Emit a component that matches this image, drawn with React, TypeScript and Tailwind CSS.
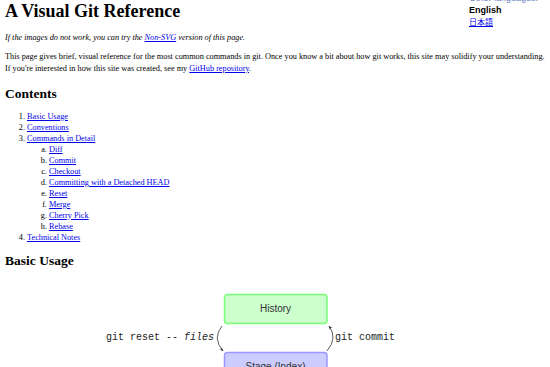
const LINK = "text-[#0000ee] underline";

// Table of contents, nested the way the page has it.
const CONTENTS: { title: string; children?: string[] }[] = [
  { title: "Basic Usage" },
  { title: "Conventions" },
  {
    title: "Commands in Detail",
    children: [
      "Diff",
      "Commit",
      "Checkout",
      "Committing with a Detached HEAD",
      "Reset",
      "Merge",
      "Cherry Pick",
      "Rebase",
    ],
  },
  { title: "Technical Notes" },
];

function Diagram() {
  // Top of the basic-usage figure; page coordinates with y shifted by the svg's top.
  return (
    <svg width="550" height="80" viewBox="0 0 550 80" className="-mx-[5px] block">
      <defs>
        <marker id="arrow" viewBox="0 0 10 10" refX="9" refY="5" markerWidth="5" markerHeight="5" orient="auto-start-reverse">
          <path d="M0 1 L10 5 L0 9 L3 5 Z" fill="#333" />
        </marker>
      </defs>
      <rect x="224.5" y="4.5" width="102.5" height="29" rx="3" fill="#ccffcc" stroke="#77ff77" strokeWidth="1.5" />
      <text x="275.5" y="22" textAnchor="middle" fontFamily="Liberation Sans, sans-serif" fontSize="10" fill="#333">
        History
      </text>
      <rect x="224.5" y="62.5" width="102.5" height="29" rx="3" fill="#ccccff" stroke="#9999ff" strokeWidth="1.5" />
      <text x="275.5" y="80" textAnchor="middle" fontFamily="Liberation Sans, sans-serif" fontSize="10" fill="#333">
        Stage (Index)
      </text>
      <path d="M222 36 Q212 48 223 61" fill="none" stroke="#333" strokeWidth="0.8" markerEnd="url(#arrow)" />
      <path d="M327 61 Q338 48 329 36" fill="none" stroke="#333" strokeWidth="0.8" markerEnd="url(#arrow)" />
      <text x="214" y="50" textAnchor="end" fontFamily="Liberation Mono, monospace" fontSize="10" fill="#222">
        git reset -- <tspan fontStyle="italic">files</tspan>
      </text>
      <text x="335" y="50" fontFamily="Liberation Mono, monospace" fontSize="10" fill="#222">
        git commit
      </text>
    </svg>
  );
}

export default function App() {
  return (
    <div className="relative h-[367px] w-[550px] overflow-hidden bg-white px-[5px] [font-family:'Liberation_Serif',serif] text-[8.25px] text-black">
      {/* language picker sits over the top-right corner */}
      <div className="absolute right-0 top-[-8px] w-[81px] [font-family:'Liberation_Sans',sans-serif] text-[9px] leading-[12px]">
        <div className="text-[#6b7fc0]">Other languages:</div>
        <div className="font-bold">English</div>
        <a href="#" className={`${LINK} [font-family:'Liberation_Sans','Noto_Sans_CJK_JP',sans-serif] text-[8px]`}>
          日本語
        </a>
      </div>

      <h1 className="pt-[2px] text-[18px] font-bold leading-[18px]">A Visual Git Reference</h1>

      <p className="mt-[11.5px] italic leading-[12px]">
        If the images do not work, you can try the{" "}
        <a href="#" className={LINK}>
          Non-SVG
        </a>{" "}
        version of this page.
      </p>

      <p className="mt-[7px] leading-[12px]">
        This page gives brief, visual reference for the most common commands in git. Once you know a bit about how git
        works, this site may solidify your understanding.
        <br />
        If you're interested in how this site was created, see my{" "}
        <a href="#" className={LINK}>
          GitHub repository
        </a>
        .
      </p>

      <h2 className="mt-[11.7px] text-[13.5px] font-bold leading-[16px]">Contents</h2>

      <ol className="mt-[8.5px] list-decimal pl-[22px] leading-[11px]">
        {CONTENTS.map((item) => (
          <li key={item.title}>
            <a href="#" className={LINK}>
              {item.title}
            </a>
            {item.children && (
              <ol className="list-[lower-alpha] pl-[22px]">
                {item.children.map((c) => (
                  <li key={c}>
                    <a href="#" className={LINK}>
                      {c}
                    </a>
                  </li>
                ))}
              </ol>
            )}
          </li>
        ))}
      </ol>

      <h2 className="mt-[10.5px] text-[13.5px] font-bold leading-[16px]">Basic Usage</h2>

      <div className="mt-[20.6px]">
        <Diagram />
      </div>
    </div>
  );
}
